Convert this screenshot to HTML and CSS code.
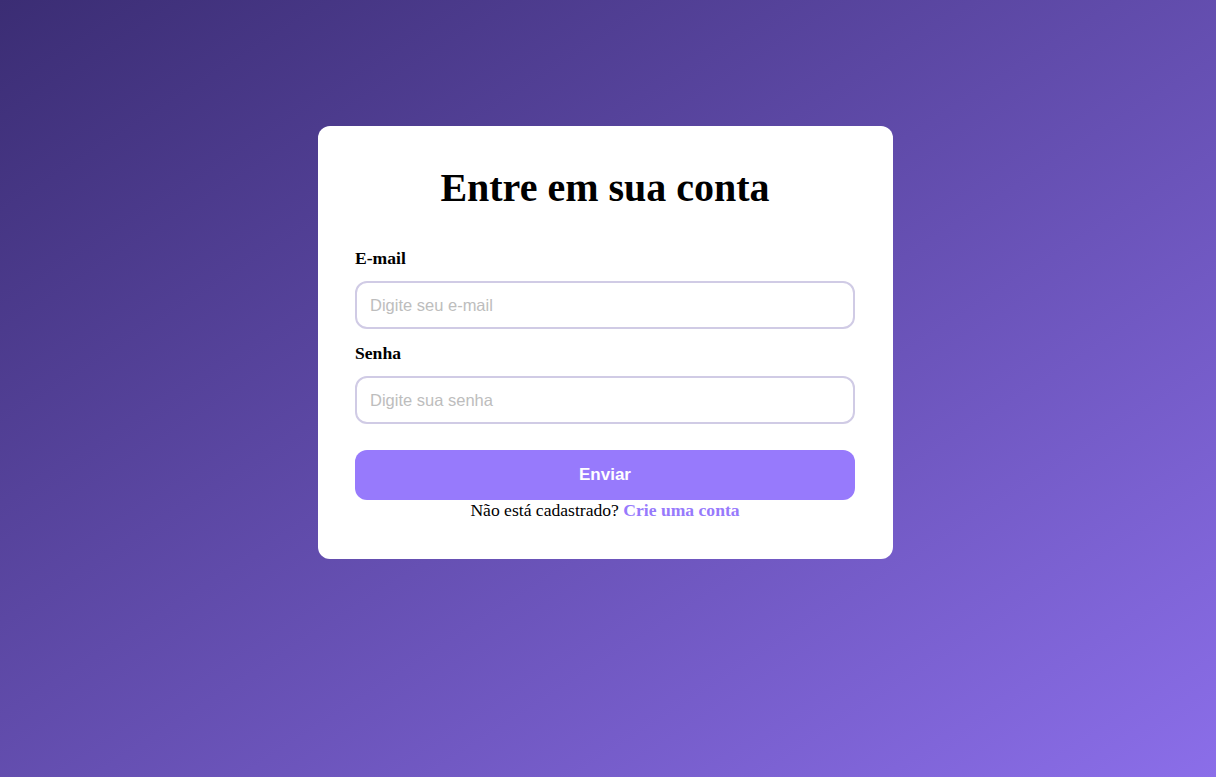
FILE: index.html
```html
<!DOCTYPE html>
<html lang="pt-BR">
<head>
<meta charset="utf-8">
<title>Login</title>
<link rel="stylesheet" href="styles.css">
</head>
<body>
<main class="page">
  <form class="card">
    <h1 class="title">Entre em sua conta</h1>
    <label class="label" for="email">E-mail</label>
    <input class="field" id="email" type="email" placeholder="Digite seu e-mail">
    <label class="label" for="senha">Senha</label>
    <input class="field" id="senha" type="password" placeholder="Digite sua senha">
    <button class="submit" type="button">Enviar</button>
    <p class="footer">Não está cadastrado? <a class="link" href="#">Crie uma conta</a></p>
  </form>
</main>
</body>
</html>
```
FILE: styles.css
```css
* { box-sizing: border-box; }
html, body { margin: 0; height: 100%; }
body {
  font-family: "Liberation Serif", "Times New Roman", serif;
  font-size: 17.6px;
  background: linear-gradient(to bottom right, #3b2d74, #8b6ee9);
  min-height: 777px;
}
.page {
  display: flex;
  justify-content: center;
  align-items: flex-start;
  padding: 126px 5px 0 0;
}
.card {
  width: 575px;
  background: #fff;
  border-radius: 12px;
  padding: 37.5px 38px 38px 37px;
  display: flex;
  flex-direction: column;
}
.title {
  margin: 0 0 37.5px;
  font-size: 40px;
  font-weight: bold;
  text-align: center;
  line-height: normal;
}
.label {
  font-weight: bold;
  margin-bottom: 12px;
  line-height: normal;
}
.field {
  height: 48px;
  border: 2px solid #d0cbe5;
  border-radius: 12px;
  padding: 0 13px;
  font-family: "Liberation Sans", Arial, sans-serif;
  font-size: 16.5px;
  margin-bottom: 14px;
  outline: none;
}
.field::placeholder { color: #bdbdbd; }
.submit {
  margin-top: 12px;
  height: 50px;
  border: none;
  border-radius: 12px;
  background: #977afc;
  color: #fff;
  font-family: "Liberation Sans", Arial, sans-serif;
  font-size: 17px;
  font-weight: bold;
}
.footer {
  margin: 0;
  text-align: center;
  line-height: normal;
}
.link {
  color: #977afc;
  font-weight: bold;
  text-decoration: none;
}
```
